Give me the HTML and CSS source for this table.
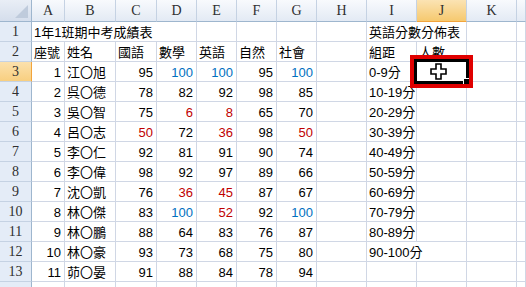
FILE: index.html
```html
<!DOCTYPE html>
<html>
<head>
<meta charset="utf-8">
<link rel="stylesheet" href="styles.css">
</head>
<body>
<div class="wrap">
<div class="sheet">
  <div class="corner"><span class="tri"></span></div>
  <div class="ch">A</div><div class="ch">B</div><div class="ch">C</div><div class="ch">D</div><div class="ch">E</div><div class="ch">F</div><div class="ch">G</div><div class="ch">H</div><div class="ch">I</div><div class="ch sel">J</div><div class="ch">K</div><div class="ch"></div>

  <div class="rh">1</div>
  <div class="c t span4">1年1班期中考成績表</div><div class="c"></div><div class="c"></div><div class="c"></div><div class="c"></div>
  <div class="c t span2">英語分數分佈表</div><div class="c"></div><div class="c"></div>

  <div class="rh">2</div>
  <div class="c t">座號</div><div class="c t">姓名</div><div class="c t">國語</div><div class="c t">數學</div><div class="c t">英語</div><div class="c t">自然</div><div class="c t">社會</div><div class="c"></div><div class="c t">組距</div><div class="c t">人數</div><div class="c"></div><div class="c"></div>

  <div class="rh sel">3</div>
  <div class="c n">1</div><div class="c t">江〇旭</div><div class="c n">95</div><div class="c n b">100</div><div class="c n b">100</div><div class="c n">95</div><div class="c n b">100</div><div class="c"></div><div class="c t">0-9分</div><div class="c"></div><div class="c"></div><div class="c"></div>

  <div class="rh">4</div>
  <div class="c n">2</div><div class="c t">呉〇德</div><div class="c n">78</div><div class="c n">82</div><div class="c n">92</div><div class="c n">98</div><div class="c n">85</div><div class="c"></div><div class="c t">10-19分</div><div class="c"></div><div class="c"></div><div class="c"></div>

  <div class="rh">5</div>
  <div class="c n">3</div><div class="c t">吳〇智</div><div class="c n">75</div><div class="c n r">6</div><div class="c n r">8</div><div class="c n">65</div><div class="c n">70</div><div class="c"></div><div class="c t">20-29分</div><div class="c"></div><div class="c"></div><div class="c"></div>

  <div class="rh">6</div>
  <div class="c n">4</div><div class="c t">呂〇志</div><div class="c n r">50</div><div class="c n">72</div><div class="c n r">36</div><div class="c n">98</div><div class="c n r">50</div><div class="c"></div><div class="c t">30-39分</div><div class="c"></div><div class="c"></div><div class="c"></div>

  <div class="rh">7</div>
  <div class="c n">5</div><div class="c t">李〇仁</div><div class="c n">92</div><div class="c n">81</div><div class="c n">91</div><div class="c n">90</div><div class="c n">74</div><div class="c"></div><div class="c t">40-49分</div><div class="c"></div><div class="c"></div><div class="c"></div>

  <div class="rh">8</div>
  <div class="c n">6</div><div class="c t">李〇偉</div><div class="c n">98</div><div class="c n">92</div><div class="c n">97</div><div class="c n">89</div><div class="c n">66</div><div class="c"></div><div class="c t">50-59分</div><div class="c"></div><div class="c"></div><div class="c"></div>

  <div class="rh">9</div>
  <div class="c n">7</div><div class="c t">沈〇凱</div><div class="c n">76</div><div class="c n r">36</div><div class="c n r">45</div><div class="c n">87</div><div class="c n">67</div><div class="c"></div><div class="c t">60-69分</div><div class="c"></div><div class="c"></div><div class="c"></div>

  <div class="rh">10</div>
  <div class="c n">8</div><div class="c t">林〇傑</div><div class="c n">83</div><div class="c n b">100</div><div class="c n r">52</div><div class="c n">92</div><div class="c n b">100</div><div class="c"></div><div class="c t">70-79分</div><div class="c"></div><div class="c"></div><div class="c"></div>

  <div class="rh">11</div>
  <div class="c n">9</div><div class="c t">林〇鵬</div><div class="c n">88</div><div class="c n">64</div><div class="c n">83</div><div class="c n">76</div><div class="c n">87</div><div class="c"></div><div class="c t">80-89分</div><div class="c"></div><div class="c"></div><div class="c"></div>

  <div class="rh">12</div>
  <div class="c n">10</div><div class="c t">林〇豪</div><div class="c n">93</div><div class="c n">73</div><div class="c n">68</div><div class="c n">75</div><div class="c n">80</div><div class="c"></div><div class="c t span2">90-100分</div><div class="c"></div><div class="c"></div>

  <div class="rh">13</div>
  <div class="c n">11</div><div class="c t">茆〇晏</div><div class="c n">91</div><div class="c n">88</div><div class="c n">84</div><div class="c n">78</div><div class="c n">94</div><div class="c"></div><div class="c"></div><div class="c"></div><div class="c"></div><div class="c"></div>

  <div class="rh"></div>
  <div class="c"></div><div class="c"></div><div class="c"></div><div class="c"></div><div class="c"></div><div class="c"></div><div class="c"></div><div class="c"></div><div class="c"></div><div class="c"></div><div class="c"></div><div class="c"></div>
</div>

<div class="selbox"><span class="handle"></span></div>
<div class="cursor">
  <svg width="20" height="20" viewBox="0 0 20 20">
    <path d="M7 2 H12 V7 H17 V12 H12 V17 H7 V12 H2 V7 H7 Z" fill="#fff" stroke="#000" stroke-width="1.6"/>
  </svg>
</div>
<div class="redbox"></div>
</div>
</body>
</html>
```
FILE: styles.css
```css
html, body {
  margin: 0;
  padding: 0;
  background: #fff;
  overflow: hidden;
}
.wrap {
  position: relative;
  width: 526px;
  height: 287px;
  overflow: hidden;
}
.sheet {
  display: grid;
  grid-template-columns: 32px 33px 51px 41px 40px 40px 40px 40px 50px 50px 50px 50px 1fr;
  grid-template-rows: 22px;
  grid-auto-rows: 20px;
  font-family: "Liberation Sans", "Noto Sans CJK TC", sans-serif;
  font-size: 13px;
  color: #000;
}
.sheet > div {
  box-sizing: border-box;
  border-right: 1px solid #d0d7e5;
  border-bottom: 1px solid #d0d7e5;
  white-space: nowrap;
  overflow: hidden;
}
.corner {
  position: relative;
  background: linear-gradient(#e9eef6, #d5deec);
  border-right: 1px solid #9eb6ce !important;
  border-bottom: 1px solid #9eb6ce !important;
}
.tri {
  position: absolute;
  right: 3px;
  bottom: 3px;
  width: 0;
  height: 0;
  border-left: 13px solid transparent;
  border-bottom: 13px solid #bfcbdc;
}
.ch {
  background: linear-gradient(#f8fafd, #e3eaf4);
  border-right: 1px solid #c5d2e3 !important;
  border-bottom: 1px solid #9eb6ce !important;
  font-family: "Liberation Serif", "Noto Sans CJK TC", serif;
  font-size: 14px;
  color: #2f2f2f;
  text-align: center;
  line-height: 22px;
}
.ch.sel {
  background: linear-gradient(#fbe3b3, #f6c96f);
  border-bottom: 1px solid #f2a43c !important;
}
.rh {
  background: #e4ecf7;
  border-right: 1px solid #9eb6ce !important;
  border-bottom: 1px solid #c5d2e3 !important;
  font-family: "Liberation Serif", "Noto Sans CJK TC", serif;
  font-size: 14px;
  color: #2f2f2f;
  text-align: center;
  line-height: 20px;
}
.rh.sel {
  background: linear-gradient(#fbe1ad, #f8cf80);
  border-right: 1px solid #f2a43c !important;
}
.c {
  line-height: 19px;
  padding: 1px 3px 0 3px;
}
.t { text-align: left; padding-left: 2px; }
.n { text-align: right; padding-right: 3px; }
.r { color: #c00000; }
.b { color: #0070c0; }
.span4 { grid-column: span 4; overflow: visible !important; }
.span2 { grid-column: span 2; overflow: visible !important; }

.selbox {
  position: absolute;
  left: 414px;
  top: 59px;
  width: 55px;
  height: 25px;
  box-sizing: border-box;
  border: 3px solid #000;
  background: #fff;
}
.handle {
  position: absolute;
  right: -4px;
  bottom: -4px;
  width: 5px;
  height: 5px;
  background: #000;
  border: 1px solid #fff;
}
.cursor {
  position: absolute;
  left: 429px;
  top: 62px;
  width: 20px;
  height: 20px;
}
.cursor svg { display: block; }
.redbox {
  position: absolute;
  left: 410px;
  top: 55px;
  width: 63px;
  height: 33px;
  box-sizing: border-box;
  border: 4px solid #e00000;
}
```
